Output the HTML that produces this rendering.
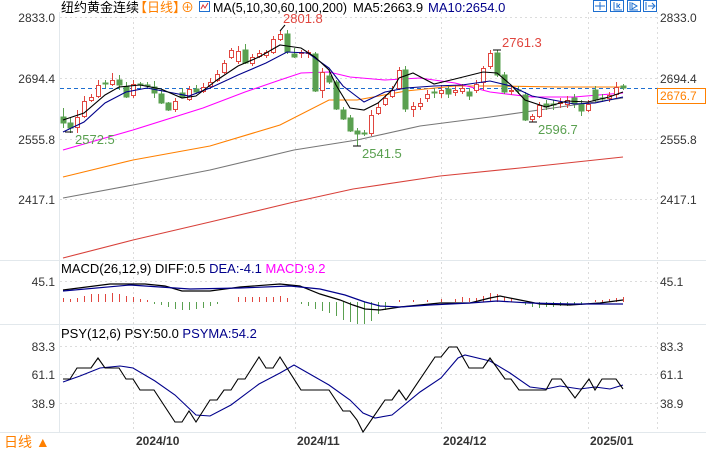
<!DOCTYPE html>
<html><head><meta charset="utf-8"><style>
body{margin:0;width:706px;height:450px;overflow:hidden;background:#fff;font-family:"Liberation Sans","Noto Sans CJK SC",sans-serif}
svg{position:absolute;left:0;top:0}
text{font-family:"Liberation Sans","Noto Sans CJK SC",sans-serif}
</style></head><body>
<svg width="706" height="450" viewBox="0 0 706 450">
<g stroke="#e2e8ec" stroke-width="1">
<line x1="59.5" y1="12" x2="59.5" y2="432"/>
<line x1="0" y1="260.5" x2="706" y2="260.5"/>
<line x1="0" y1="324.5" x2="706" y2="324.5"/>
<line x1="0" y1="432.5" x2="706" y2="432.5"/>
</g>
<g stroke="#dcdcdc" stroke-dasharray="2,3" stroke-width="1">
<line x1="60" y1="17.5" x2="657" y2="17.5"/><line x1="60" y1="78.5" x2="657" y2="78.5"/>
<line x1="60" y1="139.5" x2="657" y2="139.5"/><line x1="60" y1="199.5" x2="657" y2="199.5"/>
<line x1="60" y1="281.5" x2="657" y2="281.5"/>
<line x1="60" y1="346.5" x2="657" y2="346.5"/><line x1="60" y1="374.5" x2="657" y2="374.5"/><line x1="60" y1="403.5" x2="657" y2="403.5"/>
<line x1="133.5" y1="12" x2="133.5" y2="432"/><line x1="295.5" y1="12" x2="295.5" y2="432"/>
<line x1="441.5" y1="12" x2="441.5" y2="432"/><line x1="588.5" y1="12" x2="588.5" y2="432"/>
<line x1="657.5" y1="12" x2="657.5" y2="432"/>
</g>
<line x1="60" y1="88.5" x2="657" y2="88.5" stroke="#1e6fd0" stroke-dasharray="4,3"/>
<g fill="none" stroke-width="1.1">
<polyline stroke="#d8413a" points="63,258 133,240 210,222 294,202 353,189 440,176 520,168 595,160 623,157"/>
<polyline stroke="#777" points="63,198 133,185 210,170 294,150 357,140 420,126 490,117 553,108 623,98"/>
<polyline stroke="#ff8000" points="63,177 133,160 210,146 280,125 329,100 357,100 406,91 455,86 497,86 560,87 623,87"/>
<polyline stroke="#ff00ff" points="63,150 133,130 203,108 245,92 280,80 301,73 329,72 350,77 385,80 420,78 455,83 490,92 532,97 574,97 623,93"/>
</g>
<g stroke-width="1">
<g fill="#5aa050" stroke="#5aa050">
<line x1="63.5" y1="108" x2="63.5" y2="128"/><rect x="61" y="117" width="5" height="6"/>
<line x1="70.5" y1="118" x2="70.5" y2="133"/><rect x="68" y="123" width="5" height="5"/>
<line x1="105.5" y1="80" x2="105.5" y2="88"/><rect x="103" y="83" width="5" height="1"/>
<line x1="119.5" y1="75" x2="119.5" y2="90"/><rect x="117" y="80" width="5" height="5"/>
<line x1="126.5" y1="82" x2="126.5" y2="98"/><rect x="124" y="87" width="5" height="10"/>
<line x1="140.5" y1="82" x2="140.5" y2="88"/><rect x="138" y="84" width="5" height="1"/>
<line x1="147.5" y1="82" x2="147.5" y2="88"/><rect x="145" y="85" width="5" height="1"/>
<line x1="154.5" y1="81" x2="154.5" y2="98"/><rect x="152" y="87" width="5" height="6"/>
<line x1="161.5" y1="90" x2="161.5" y2="104"/><rect x="159" y="94" width="5" height="9"/>
<line x1="168.5" y1="102" x2="168.5" y2="111"/><rect x="166" y="103" width="5" height="7"/>
<line x1="182.5" y1="88" x2="182.5" y2="98"/><rect x="180" y="93" width="5" height="4"/>
<line x1="196.5" y1="85" x2="196.5" y2="94"/><rect x="194" y="89" width="5" height="3"/>
<line x1="245.5" y1="44" x2="245.5" y2="64"/><rect x="243" y="50" width="5" height="13"/>
<line x1="287.5" y1="30" x2="287.5" y2="54"/><rect x="285" y="34" width="5" height="18"/>
<line x1="294.5" y1="48" x2="294.5" y2="58"/><rect x="292" y="54" width="5" height="3"/>
<line x1="315.5" y1="52" x2="315.5" y2="92"/><rect x="313" y="54" width="5" height="37"/>
<line x1="329.5" y1="72" x2="329.5" y2="84"/><rect x="327" y="76" width="5" height="6"/>
<line x1="336.5" y1="80" x2="336.5" y2="110"/><rect x="334" y="82" width="5" height="27"/>
<line x1="343.5" y1="107" x2="343.5" y2="120"/><rect x="341" y="110" width="5" height="9"/>
<line x1="350.5" y1="115" x2="350.5" y2="132"/><rect x="348" y="118" width="5" height="13"/>
<line x1="357.5" y1="128" x2="357.5" y2="146"/><rect x="355" y="131" width="5" height="3"/>
<line x1="364.5" y1="130" x2="364.5" y2="136"/><rect x="362" y="133" width="5" height="1"/>
<line x1="405.5" y1="66" x2="405.5" y2="112"/><rect x="403" y="70" width="5" height="39"/>
<line x1="434.5" y1="88" x2="434.5" y2="98"/><rect x="432" y="92" width="5" height="1"/>
<line x1="448.5" y1="86" x2="448.5" y2="98"/><rect x="446" y="89" width="5" height="5"/>
<line x1="469.5" y1="88" x2="469.5" y2="100"/><rect x="467" y="92" width="5" height="4"/>
<line x1="497.5" y1="50" x2="497.5" y2="77"/><rect x="495" y="53" width="5" height="22"/>
<line x1="504.5" y1="72" x2="504.5" y2="94"/><rect x="502" y="75" width="5" height="17"/>
<line x1="518.5" y1="86" x2="518.5" y2="94"/><rect x="516" y="90" width="5" height="1"/>
<line x1="525.5" y1="92" x2="525.5" y2="121"/><rect x="523" y="95" width="5" height="25"/>
<line x1="546.5" y1="100" x2="546.5" y2="110"/><rect x="544" y="104" width="5" height="3"/>
<line x1="553.5" y1="100" x2="553.5" y2="110"/><rect x="551" y="104" width="5" height="1"/>
<line x1="574.5" y1="94" x2="574.5" y2="108"/><rect x="572" y="98" width="5" height="5"/>
<line x1="581.5" y1="100" x2="581.5" y2="116"/><rect x="579" y="104" width="5" height="7"/>
<line x1="595.5" y1="86" x2="595.5" y2="102"/><rect x="593" y="90" width="5" height="10"/>
<line x1="602.5" y1="94" x2="602.5" y2="102"/><rect x="600" y="98" width="5" height="1"/>
<line x1="623.5" y1="84" x2="623.5" y2="90"/><rect x="621" y="86" width="5" height="2"/>
</g>
<g fill="#fff" stroke="#e0463f">
<line x1="77.5" y1="110" x2="77.5" y2="133"/><rect x="75.5" y="117.5" width="4" height="10"/>
<line x1="84.5" y1="96" x2="84.5" y2="118"/><rect x="82.5" y="101.5" width="4" height="15"/>
<line x1="91.5" y1="94" x2="91.5" y2="102"/><rect x="89.5" y="97.5" width="4" height="3"/>
<line x1="98.5" y1="80" x2="98.5" y2="98"/><rect x="96.5" y="85.5" width="4" height="11"/>
<line x1="112.5" y1="73" x2="112.5" y2="86"/><rect x="110.5" y="80.5" width="4" height="4"/>
<line x1="133.5" y1="80" x2="133.5" y2="98"/><rect x="131.5" y="84.5" width="4" height="11"/>
<line x1="175.5" y1="98" x2="175.5" y2="112"/><rect x="173.5" y="101.5" width="4" height="8"/>
<line x1="189.5" y1="86" x2="189.5" y2="101"/><rect x="187.5" y="89.5" width="4" height="10"/>
<line x1="203.5" y1="83" x2="203.5" y2="93"/><rect x="201.5" y="87.5" width="4" height="4"/>
<line x1="210.5" y1="78" x2="210.5" y2="88"/><rect x="208.5" y="82.5" width="4" height="4"/>
<line x1="217.5" y1="70" x2="217.5" y2="82"/><rect x="215.5" y="74.5" width="4" height="6"/>
<line x1="224.5" y1="60" x2="224.5" y2="74"/><rect x="222.5" y="63.5" width="4" height="9"/>
<line x1="231.5" y1="48" x2="231.5" y2="59"/><rect x="229.5" y="50.5" width="4" height="7"/>
<line x1="238.5" y1="46" x2="238.5" y2="64"/><rect x="236.5" y="51.5" width="4" height="10"/>
<line x1="252.5" y1="54" x2="252.5" y2="66"/><rect x="250.5" y="57.5" width="4" height="6"/>
<line x1="259.5" y1="50" x2="259.5" y2="58"/><rect x="257.5" y="53.5" width="4" height="3"/>
<line x1="266.5" y1="50" x2="266.5" y2="58"/><rect x="264.5" y="52.5" width="4" height="3"/>
<line x1="273.5" y1="36" x2="273.5" y2="54"/><rect x="271.5" y="39.5" width="4" height="13"/>
<line x1="280.5" y1="31" x2="280.5" y2="41"/><rect x="278.5" y="34.5" width="4" height="5"/>
<line x1="301.5" y1="50" x2="301.5" y2="58"/><rect x="299.5" y="52.5" width="4" height="1"/>
<line x1="308.5" y1="50" x2="308.5" y2="58"/><rect x="306.5" y="52.5" width="4" height="1"/>
<line x1="322.5" y1="68" x2="322.5" y2="98"/><rect x="320.5" y="72.5" width="4" height="18"/>
<line x1="371.5" y1="110" x2="371.5" y2="136"/><rect x="369.5" y="115.5" width="4" height="18"/>
<line x1="378.5" y1="102" x2="378.5" y2="115"/><rect x="376.5" y="107.5" width="4" height="6"/>
<line x1="385.5" y1="95" x2="385.5" y2="106"/><rect x="383.5" y="98.5" width="4" height="6"/>
<line x1="392.5" y1="86" x2="392.5" y2="98"/><rect x="390.5" y="90.5" width="4" height="6"/>
<line x1="399.5" y1="67" x2="399.5" y2="90"/><rect x="397.5" y="70.5" width="4" height="18"/>
<line x1="413.5" y1="102" x2="413.5" y2="117"/><rect x="411.5" y="106.5" width="4" height="3"/>
<line x1="420.5" y1="98" x2="420.5" y2="110"/><rect x="418.5" y="103.5" width="4" height="3"/>
<line x1="427.5" y1="90" x2="427.5" y2="102"/><rect x="425.5" y="94.5" width="4" height="4"/>
<line x1="441.5" y1="85" x2="441.5" y2="98"/><rect x="439.5" y="90.5" width="4" height="3"/>
<line x1="455.5" y1="86" x2="455.5" y2="96"/><rect x="453.5" y="90.5" width="4" height="2"/>
<line x1="462.5" y1="84" x2="462.5" y2="94"/><rect x="460.5" y="88.5" width="4" height="3"/>
<line x1="476.5" y1="80" x2="476.5" y2="93"/><rect x="474.5" y="84.5" width="4" height="6"/>
<line x1="483.5" y1="66" x2="483.5" y2="90"/><rect x="481.5" y="68.5" width="4" height="14"/>
<line x1="490.5" y1="50" x2="490.5" y2="69"/><rect x="488.5" y="53.5" width="4" height="13"/>
<line x1="511.5" y1="86" x2="511.5" y2="95"/><rect x="509.5" y="90.5" width="4" height="1"/>
<line x1="532.5" y1="114" x2="532.5" y2="122"/><rect x="530.5" y="116.5" width="4" height="3"/>
<line x1="539.5" y1="102" x2="539.5" y2="118"/><rect x="537.5" y="105.5" width="4" height="11"/>
<line x1="560.5" y1="98" x2="560.5" y2="108"/><rect x="558.5" y="102.5" width="4" height="1"/>
<line x1="567.5" y1="96" x2="567.5" y2="108"/><rect x="565.5" y="100.5" width="4" height="4"/>
<line x1="588.5" y1="100" x2="588.5" y2="112"/><rect x="586.5" y="104.5" width="4" height="6"/>
<line x1="609.5" y1="92" x2="609.5" y2="102"/><rect x="607.5" y="95.5" width="4" height="3"/>
<line x1="616.5" y1="82" x2="616.5" y2="98"/><rect x="614.5" y="87.5" width="4" height="7"/>
</g>
</g>
<g fill="none" stroke-width="1.1">
<polyline stroke="#00008b" points="63,132 84,122 105,103 126,92 147,88 168,92 189,96 210,88 238,75 266,63 287,52 308,53 329,68 343,86 364,102 385,92 406,88 434,86 462,85 490,81 511,86 532,96 553,100 574,104 595,103 623,97"/>
<polyline stroke="#000" points="63,120 84,113 105,95 119,87 140,85 161,89 182,98 196,96 217,80 238,66 259,57 280,45 287,46 301,48 315,57 329,70 336,85 350,108 364,110 378,103 392,90 399,78 413,73 434,84 455,79 483,72 497,73 511,85 525,100 546,107 567,101 588,102 609,97 623,92"/>
</g>
<g stroke="#000"><line x1="280" y1="31" x2="285" y2="25"/><line x1="65" y1="132" x2="73" y2="132"/><line x1="353" y1="146" x2="361" y2="146"/><line x1="493" y1="50" x2="501" y2="50"/><line x1="529" y1="122" x2="537" y2="122"/></g>
<g font-size="13">
<text x="283" y="23" fill="#e0463f">2801.8</text>
<text x="502" y="47" fill="#e0463f">2761.3</text>
<text x="75" y="144" fill="#5aa050">2572.5</text>
<text x="362" y="158" fill="#5aa050">2541.5</text>
<text x="538" y="134" fill="#5aa050">2596.7</text>
</g>
<g stroke-width="1">
<g stroke="#e0463f">
<line x1="63.5" y1="298" x2="63.5" y2="302"/><line x1="70.5" y1="299" x2="70.5" y2="302"/><line x1="77.5" y1="298" x2="77.5" y2="302"/><line x1="84.5" y1="296" x2="84.5" y2="302"/><line x1="91.5" y1="294" x2="91.5" y2="302"/><line x1="98.5" y1="294" x2="98.5" y2="302"/><line x1="105.5" y1="294" x2="105.5" y2="302"/><line x1="112.5" y1="293" x2="112.5" y2="302"/><line x1="119.5" y1="294" x2="119.5" y2="302"/><line x1="126.5" y1="296" x2="126.5" y2="302"/><line x1="133.5" y1="297" x2="133.5" y2="302"/><line x1="140.5" y1="299" x2="140.5" y2="302"/><line x1="147.5" y1="300" x2="147.5" y2="302"/>
<line x1="238.5" y1="297" x2="238.5" y2="302"/><line x1="245.5" y1="297" x2="245.5" y2="302"/><line x1="252.5" y1="297" x2="252.5" y2="302"/><line x1="259.5" y1="297" x2="259.5" y2="302"/><line x1="266.5" y1="297" x2="266.5" y2="302"/><line x1="273.5" y1="297" x2="273.5" y2="302"/><line x1="280.5" y1="296" x2="280.5" y2="302"/><line x1="287.5" y1="298" x2="287.5" y2="302"/>
<line x1="399.5" y1="300" x2="399.5" y2="302"/><line x1="413.5" y1="300" x2="413.5" y2="302"/><line x1="427.5" y1="300" x2="427.5" y2="302"/><line x1="441.5" y1="299" x2="441.5" y2="302"/><line x1="455.5" y1="299" x2="455.5" y2="302"/><line x1="462.5" y1="297" x2="462.5" y2="302"/><line x1="469.5" y1="298" x2="469.5" y2="302"/><line x1="476.5" y1="298" x2="476.5" y2="302"/><line x1="483.5" y1="296" x2="483.5" y2="302"/><line x1="490.5" y1="293" x2="490.5" y2="302"/><line x1="497.5" y1="294" x2="497.5" y2="302"/><line x1="504.5" y1="297" x2="504.5" y2="302"/><line x1="511.5" y1="299" x2="511.5" y2="302"/>
<line x1="595.5" y1="300" x2="595.5" y2="302"/><line x1="602.5" y1="300" x2="602.5" y2="302"/><line x1="609.5" y1="299" x2="609.5" y2="302"/><line x1="616.5" y1="298" x2="616.5" y2="302"/><line x1="623.5" y1="297" x2="623.5" y2="302"/>
</g>
<g stroke="#5aa050">
<line x1="154.5" y1="302" x2="154.5" y2="304"/><line x1="161.5" y1="302" x2="161.5" y2="305"/><line x1="168.5" y1="302" x2="168.5" y2="307"/><line x1="175.5" y1="302" x2="175.5" y2="309"/><line x1="182.5" y1="302" x2="182.5" y2="310"/><line x1="189.5" y1="302" x2="189.5" y2="310"/><line x1="196.5" y1="302" x2="196.5" y2="309"/><line x1="203.5" y1="302" x2="203.5" y2="308"/><line x1="210.5" y1="302" x2="210.5" y2="306"/><line x1="217.5" y1="302" x2="217.5" y2="304"/>
<line x1="301.5" y1="302" x2="301.5" y2="304"/><line x1="308.5" y1="302" x2="308.5" y2="306"/><line x1="315.5" y1="302" x2="315.5" y2="309"/><line x1="322.5" y1="302" x2="322.5" y2="311"/><line x1="329.5" y1="302" x2="329.5" y2="313"/><line x1="336.5" y1="302" x2="336.5" y2="316"/><line x1="343.5" y1="302" x2="343.5" y2="320"/><line x1="350.5" y1="302" x2="350.5" y2="322"/><line x1="357.5" y1="302" x2="357.5" y2="324"/><line x1="364.5" y1="302" x2="364.5" y2="324"/><line x1="371.5" y1="302" x2="371.5" y2="321"/><line x1="378.5" y1="302" x2="378.5" y2="314"/><line x1="385.5" y1="302" x2="385.5" y2="310"/>
<line x1="525.5" y1="302" x2="525.5" y2="305"/><line x1="532.5" y1="302" x2="532.5" y2="307"/><line x1="539.5" y1="302" x2="539.5" y2="308"/><line x1="546.5" y1="302" x2="546.5" y2="307"/><line x1="553.5" y1="302" x2="553.5" y2="307"/><line x1="560.5" y1="302" x2="560.5" y2="306"/><line x1="567.5" y1="302" x2="567.5" y2="306"/><line x1="574.5" y1="302" x2="574.5" y2="305"/><line x1="581.5" y1="302" x2="581.5" y2="305"/>
</g>
</g>
<g fill="none" stroke-width="1.2">
<polyline stroke="#000" points="63,290 110,284 145,284 165,286 182,291 210,291 240,287 280,284 300,286 320,294 340,300 353,305 365,309 380,310 400,307 420,305 440,303 470,303 490,298 500,296 520,300 540,304 570,305 600,303 623,300"/>
<polyline stroke="#00008b" points="63,291 130,285 190,289 240,288 290,286 320,289 345,295 365,302 380,306 400,307 430,305 470,303 497,301 530,303 570,304 623,304"/>
</g>
<g fill="none" stroke-width="1.1">
<polyline stroke="#00008b" points="63,382 80,376 100,368 120,366 133,368 155,381 175,395 196,415 210,416 231,405 259,384 280,373 294,365 308,373 329,385 350,400 363,413 375,418 392,415 420,392 441,378 458,358 465,355 490,361 510,373 530,387 546,389 560,386 580,389 595,387 610,389 623,385"/>
<polyline stroke="#000" points="63,379 70,379 77,368 91,368 98,358 105,368 119,368 126,379 133,379 140,390 154,390 175,422 182,422 189,411 196,422 210,400 217,400 224,390 231,390 238,379 245,379 259,357 266,368 273,368 280,357 301,390 329,390 343,411 350,411 357,420 363,432 385,400 392,400 399,390 406,400 435,357 441,357 449,347 457,347 469,368 483,368 490,358 505,379 511,379 519,390 546,390 552,379 561,379 575,398 589,379 595,390 602,379 610,379 616,379 623,389"/>
</g>
<g font-size="12" fill="#333">
<text x="55" y="22" text-anchor="end">2833.0</text>
<text x="55" y="83" text-anchor="end">2694.4</text>
<text x="55" y="144" text-anchor="end">2555.8</text>
<text x="55" y="204" text-anchor="end">2417.1</text>
<text x="55" y="286" text-anchor="end">45.1</text>
<text x="55" y="351" text-anchor="end">83.3</text>
<text x="55" y="379" text-anchor="end">61.1</text>
<text x="55" y="408" text-anchor="end">38.9</text>
<text x="660" y="22">2833.0</text>
<text x="660" y="83">2694.4</text>
<text x="660" y="144">2555.8</text>
<text x="660" y="204">2417.1</text>
<text x="660" y="286">45.1</text>
<text x="660" y="351">83.3</text>
<text x="660" y="379">61.1</text>
<text x="660" y="408">38.9</text>
</g>
<rect x="657.5" y="88.5" width="48" height="15" fill="#fff" stroke="#ff8000"/>
<text x="660" y="100" font-size="12" fill="#ff8000">2676.7</text>
<g font-size="13">
<text x="61" y="12" fill="#000">纽约黄金连续</text>
<text x="134" y="12" fill="#ff8000">【日线】</text>
<text x="181" y="12" fill="#ff8000">⊕</text>
<text x="213" y="12" fill="#000" textLength="134" lengthAdjust="spacingAndGlyphs">MA(5,10,30,60,100,200)</text>
<text x="353" y="12" fill="#000">MA5:2663.9</text>
<text x="428" y="12" fill="#00008b">MA10:2654.0</text>
<text x="61" y="273" fill="#000">MACD(26,12,9) <tspan>DIFF:0.5</tspan>  <tspan fill="#00008b">DEA:-4.1</tspan>  <tspan fill="#ff00ff">MACD:9.2</tspan></text>
<text x="61" y="338" fill="#000">PSY(12,6) PSY:50.0  <tspan fill="#00008b">PSYMA:54.2</tspan></text>
</g>
<g stroke="#1e6fd0" fill="none"><rect x="199.5" y="1.5" width="10" height="10"/><polyline points="201,9 203,5 205,8 208,3" stroke="#d33"/></g>
<g stroke="#1e6fd0" fill="none">
<rect x="593.5" y="0.5" width="13" height="11"/><rect x="610.5" y="0.5" width="13" height="11"/><rect x="627.5" y="0.5" width="13" height="11"/><rect x="643.5" y="0.5" width="13" height="11"/>
<path d="M600 2v8M595 6h10M614 2v8h8M617 3v5M620 4l-2 2 2 2M630 2v8h8M632 3l5 3-5 3zM646 2v8M648 6h6M652 3l3 3-3 3"/>
</g>
<text x="4" y="447" font-size="14" fill="#ff8000">日线 ▲</text>
<g font-size="12" font-weight="bold" fill="#333">
<text x="136" y="445">2024/10</text>
<text x="297" y="445">2024/11</text>
<text x="443" y="445">2024/12</text>
<text x="590" y="445">2025/01</text>
</g>
</svg>
</body></html>
